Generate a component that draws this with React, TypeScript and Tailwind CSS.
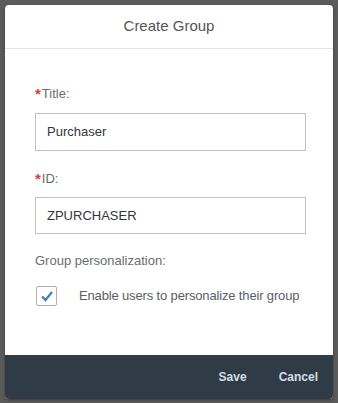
import React from "react";

function Req() {
  return <span className="text-[#d04343] text-[15px] font-bold leading-none relative top-[1px] mr-[1px]">*</span>;
}

export default function App() {
  return (
    <div className="w-[338px] h-[403px] bg-[#5b5b5b] p-[5px] pb-[4px]" style={{ fontFamily: '"Liberation Sans", Arial, sans-serif' }}>
      <div className="h-full flex flex-col bg-white rounded-[4px] overflow-hidden shadow-[0_1px_3px_rgba(0,0,0,0.4)]">
        <div className="h-[44px] shrink-0 flex items-center justify-center border-b border-[#e5e5e5] text-[15px] text-[#555]">
          Create Group
        </div>
        <div className="flex-1 flex flex-col px-[30px] pt-[36px]">
          <div className="text-[13px] text-[#6a6d70] leading-[16px]">
            <Req />Title:
          </div>
          <div className="mt-[11px] h-[38px] w-[271px] border border-[#c2c2c2] flex items-center px-[11px] text-[13px] text-[#32363a]">
            Purchaser
          </div>
          <div className="mt-[19px] text-[13px] text-[#6a6d70] leading-[16px]">
            <Req />ID:
          </div>
          <div className="mt-[10px] h-[37px] w-[271px] border border-[#c2c2c2] flex items-center px-[11px] text-[13px] text-[#32363a]">
            ZPURCHASER
          </div>
          <div className="mt-[19px] text-[13px] text-[#6a6d70] leading-[16px]">Group personalization:</div>
          <div className="mt-[17px] flex items-center">
            <div className="w-[21px] h-[20px] ml-[1px] shrink-0 border border-[#b0b0b0] rounded-[2px] flex items-center justify-center">
              <svg width="14" height="12" viewBox="0 0 14 12">
                <path d="M2 6.5 L5.5 10 L12 2" fill="none" stroke="#3f7fbf" strokeWidth="2.2" />
              </svg>
            </div>
            <span className="ml-[22px] text-[13px] text-[#5a5e62] whitespace-nowrap tracking-[-0.15px]">Enable users to personalize their group</span>
          </div>
        </div>
        <div className="h-[44px] shrink-0 bg-[#2f3c48] flex items-center justify-end pr-[15px] gap-[32px] text-[12px] font-bold text-[#d5dde5]">
          <span>Save</span>
          <span>Cancel</span>
        </div>
      </div>
    </div>
  );
}
